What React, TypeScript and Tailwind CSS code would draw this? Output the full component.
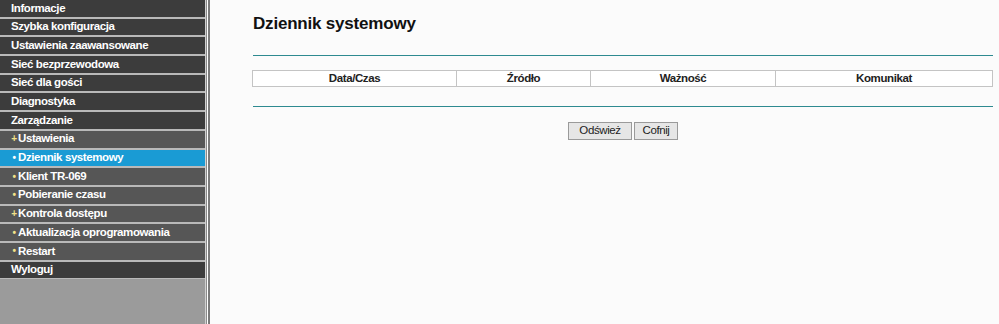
const menu: { label: string; level: 0 | 1; mark?: '+' | '•'; active?: boolean }[] = [
  { label: 'Informacje', level: 0 },
  { label: 'Szybka konfiguracja', level: 0 },
  { label: 'Ustawienia zaawansowane', level: 0 },
  { label: 'Sieć bezprzewodowa', level: 0 },
  { label: 'Sieć dla gości', level: 0 },
  { label: 'Diagnostyka', level: 0 },
  { label: 'Zarządzanie', level: 0 },
  { label: 'Ustawienia', level: 1, mark: '+' },
  { label: 'Dziennik systemowy', level: 1, mark: '•', active: true },
  { label: 'Klient TR-069', level: 1, mark: '•' },
  { label: 'Pobieranie czasu', level: 1, mark: '•' },
  { label: 'Kontrola dostępu', level: 1, mark: '+' },
  { label: 'Aktualizacja oprogramowania', level: 1, mark: '•' },
  { label: 'Restart', level: 1, mark: '•' },
  { label: 'Wyloguj', level: 0 },
];

function MenuRow({ item }: { item: (typeof menu)[number] }) {
  const bg = item.active ? 'bg-[#1a9bd4]' : item.level === 0 ? 'bg-[#3c3c3c]' : 'bg-[#565656]';
  return (
    <div className={`${bg} h-[16.7px] flex items-center text-white text-[11.5px] tracking-[-0.4px] font-bold leading-none`}>
      {item.level === 0 ? (
        <span className="pl-[11px]">{item.label}</span>
      ) : (
        <span className="pl-[10px] flex items-center">
          <span
            className={`w-[8px] text-center text-[10px] ${item.active ? 'text-white' : 'text-[#f2e28a]'}`}
          >
            {item.mark}
          </span>
          <span>{item.label}</span>
        </span>
      )}
    </div>
  );
}

export default function App() {
  const cols = [
    { label: 'Data/Czas', w: 'w-[203px]' },
    { label: 'Źródło', w: 'w-[134px]' },
    { label: 'Ważność', w: 'w-[185px]' },
    { label: 'Komunikat', w: 'flex-1' },
  ];
  return (
    <div
      className="w-[999px] h-[324px] flex bg-[#fbfbfb] overflow-hidden"
      style={{ fontFamily: '"Liberation Sans", Arial, sans-serif' }}
    >
      {/* sidebar */}
      <div className="w-[205px] shrink-0 bg-[#9b9b9b] flex flex-col">
        <div className="flex flex-col gap-[2px] bg-[#b9b9b9] pb-[1px]">
          {menu.map((m) => (
            <MenuRow key={m.label} item={m} />
          ))}
        </div>
      </div>
      <div className="w-[1px] bg-[#d0d0d0]" />
      <div className="w-[1px] bg-[#8c8c8c]" />
      <div className="w-[1px] bg-white" />
      <div className="w-[2px] bg-[#7a7a7a]" />

      {/* content */}
      <div className="flex-1 pl-[43px] pr-[6px]">
        <h1 className="mt-[14px] text-[17px] font-bold text-[#111] leading-[20px] tracking-[-0.2px]">Dziennik systemowy</h1>
        <div className="mt-[21px] h-[1px] bg-[#2e8a90]" />
        <div className="mt-[14px] -ml-[1px] flex h-[17px] border border-[#c4c4c4] bg-white">
          {cols.map((c, i) => (
            <div
              key={c.label}
              className={`${c.w} ${i > 0 ? 'border-l border-[#c4c4c4]' : ''} flex items-center justify-center pt-[1px] text-[11.5px] tracking-[-0.4px] font-bold text-[#222]`}
            >
              {c.label}
            </div>
          ))}
        </div>
        <div className="mt-[19px] h-[1px] bg-[#2e8a90]" />
        <div className="mt-[15px] flex justify-center gap-[2px]">
          <button className="h-[18px] w-[64px] border border-[#9a9a9a] bg-[#e6e6e6] text-[11.5px] tracking-[-0.4px] text-[#222] leading-none">
            Odśwież
          </button>
          <button className="h-[18px] w-[44px] border border-[#9a9a9a] bg-[#e6e6e6] text-[11.5px] tracking-[-0.4px] text-[#222] leading-none">
            Cofnij
          </button>
        </div>
      </div>
    </div>
  );
}
